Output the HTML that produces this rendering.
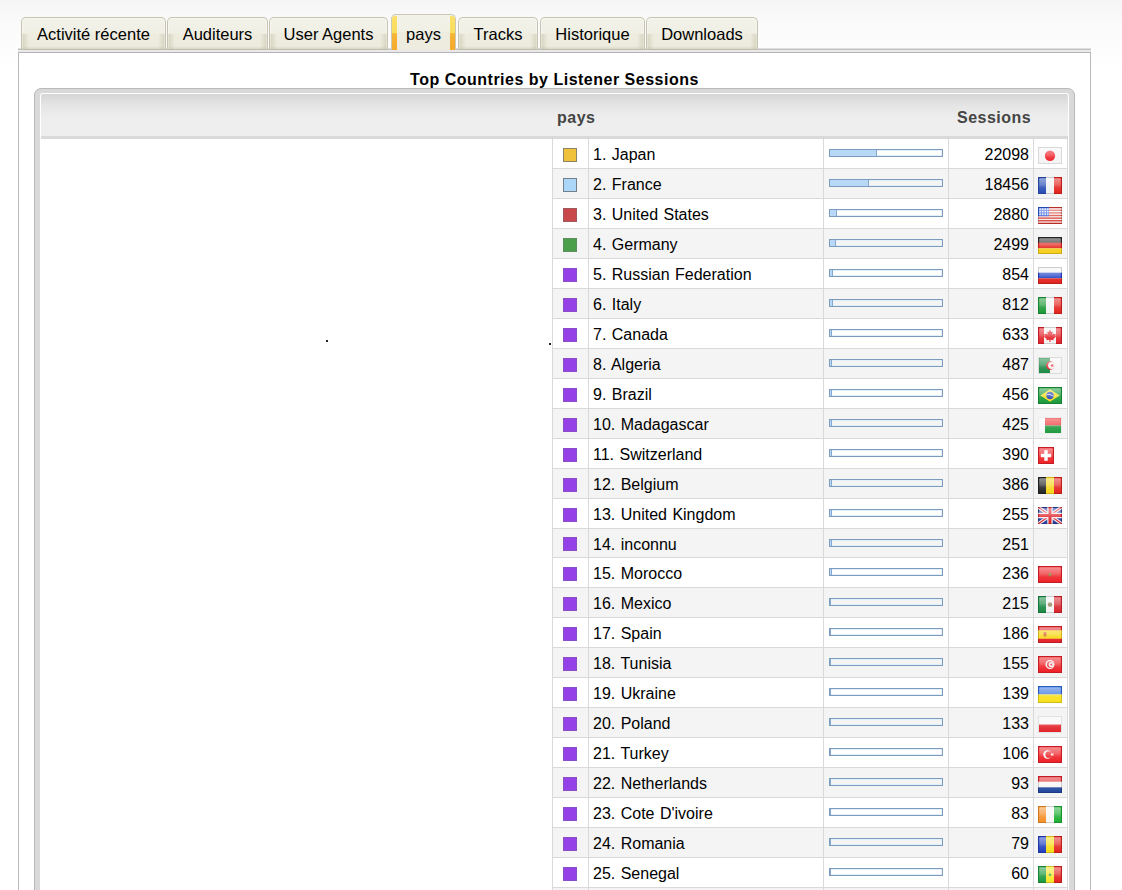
<!DOCTYPE html>
<html lang="fr">
<head>
<meta charset="utf-8">
<title>Top Countries by Listener Sessions</title>
<style>
*{box-sizing:border-box}
html,body{margin:0;padding:0}
body{width:1122px;height:890px;overflow:hidden;position:relative;font-family:"Liberation Sans",sans-serif;font-size:16px;color:#000;
 background:linear-gradient(#f5f5f5 0,#fafafa 22px,#fdfdfd 48px,#fff 72px) #fff}
ul.tabs{list-style:none;margin:0;padding:0;position:absolute;left:0;top:0;z-index:2}
.tab{position:absolute;top:17px;height:33px;border:1px solid #c6c4b1;border-bottom:1px solid #bfbeac;border-radius:5px 5px 0 0;text-align:center;line-height:32px;font-size:16.5px;white-space:nowrap;
 background:linear-gradient(to right,rgba(176,173,140,.38),rgba(176,173,140,0)) left bottom/7px 50% no-repeat,linear-gradient(to left,rgba(176,173,140,.38),rgba(176,173,140,0)) right bottom/7px 50% no-repeat,linear-gradient(to top,rgba(176,173,140,.3),rgba(176,173,140,0)) left bottom/100% 3px no-repeat,linear-gradient(#f3f2e9 0,#f0efe4 50%,#edecdf 50%,#ecebde 100%);
 box-shadow:inset 0 1px 0 #f8f7f0,inset 1px 0 0 rgba(255,255,255,.35),inset -1px 0 0 rgba(255,255,255,.35)}
.tab span{position:relative}
.tab.active{top:14px;height:36px;line-height:38px;border-color:#cbc9b4;border-bottom:none;background:linear-gradient(#f3f2e8 0,#f1f0e5 50%,#edecdf 50%,#edecdf 100%);box-shadow:none}
.tab.active:before,.tab.active:after{content:"";position:absolute;top:1px;bottom:0;width:5px;background:linear-gradient(#fbe169 0,#fbdd5c 50%,#f7b535 52%,#f5aa2c 100%)}
.tab.active:before{left:0;border-radius:3px 0 0 0}.tab.active:after{right:0;border-radius:0 3px 0 0}
#panel{position:absolute;left:18px;top:49px;width:1073px;height:900px;background:#fff;border:1px solid #b9b9bc;border-top:none;padding-top:4px}
#panel:before{content:"";position:absolute;left:-1px;right:-1px;top:-1px;height:5px;background:linear-gradient(#dfdfdf 0,#dfdfdf 1px,#c0c0c0 1px,#c0c0c0 2px,#e9e9e9 2px,#e9e9e9 4px,#b4b4b8 4px,#b4b4b8 5px)}
h1{position:absolute;left:0;top:21px;width:100%;margin:0;text-align:center;font-size:16px;font-weight:bold;line-height:20px;color:#000;letter-spacing:.5px}
#frame{position:absolute;left:15px;top:39px;width:1041px;height:900px;border-radius:7px;background:#d9d9d9;border:1px solid #b9b9b9}
#inner{position:absolute;left:6px;top:5px;width:1027px;height:900px;background:#fff;border-radius:2px 2px 0 0;overflow:hidden;box-shadow:0 0 0 1px #fff}
#hdr{position:absolute;left:0;top:0;width:100%;height:45px;background:linear-gradient(#d6d6d6 0,#e5e5e5 28%,#eeeeee 58%,#eeeeee 100%);border-bottom:3px solid #d9d9d9;font-weight:bold;color:#444}
#hdr span{position:absolute;top:14px;line-height:20px;letter-spacing:.5px}
table{position:absolute;left:511px;top:44px;border-collapse:collapse;table-layout:fixed;width:516px}
td{border:1px solid #d9d9d9;height:30px;padding:0;vertical-align:middle;font-size:16px;line-height:18px;white-space:nowrap}
tr.nf td{height:29px}
tr.nf td.c2,tr.nf td.c4{padding-top:4px}
tr.nf .sw{margin-top:1px}
tr.alt td{background:#f4f4f4}
td.c1{width:36px}
td.c2{width:235px;padding:2px 0 0 4px;word-spacing:1px}
td.c3{width:125px}
td.c4{width:85px;text-align:right;padding:2px 4px 0 0}
td.c5{width:34px}
.sw{display:block;width:14px;height:14px;margin:3px 0 0 10px;background:#9441e8;border:1px solid #8a4fc4}
.bar{display:block;width:114px;height:8px;margin:0 0 1px 5px;border:1px solid #7c9cbd;background:transparent;box-shadow:inset 0 0 0 1px #e3f0fc}
.fill{display:block;height:6px;background:#b9d8f7;border-right:1px solid #86a8cc}
.dot{position:absolute;width:2px;height:2px;background:#222}
.flag{display:block;margin:4px 0 0 4px;filter:blur(.35px)}
</style>
</head>
<body>
<svg width="0" height="0" style="position:absolute"><defs>
<linearGradient id="gl" x1="0" y1="0" x2="0" y2="1">
<stop offset="0" stop-color="#fff" stop-opacity=".5"/><stop offset=".45" stop-color="#fff" stop-opacity=".3"/><stop offset=".65" stop-color="#fff" stop-opacity=".1"/><stop offset="1" stop-color="#fff" stop-opacity="0"/>
</linearGradient></defs></svg>
<ul class="tabs"><li class="tab" style="left:21px;width:145px"><span>Activité récente</span></li><li class="tab" style="left:167px;width:101px"><span>Auditeurs</span></li><li class="tab" style="left:269px;width:119px"><span>User Agents</span></li><li class="tab active" style="left:391px;width:65px"><span>pays</span></li><li class="tab" style="left:458px;width:80px"><span>Tracks</span></li><li class="tab" style="left:540px;width:105px"><span>Historique</span></li><li class="tab" style="left:646px;width:112px"><span>Downloads</span></li></ul>
<div id="panel">
<h1>Top Countries by Listener Sessions</h1>
<div id="frame"><div id="inner">
<div id="hdr"><span style="left:516px">pays</span><span style="left:916px">Sessions</span></div>
<i class="dot" style="left:285px;top:246px"></i><i class="dot" style="left:508px;top:249px"></i>
<table>
<tr class=""><td class="c1"><span class="sw" style="background:#f0c23b;border-color:#8d8466"></span></td><td class="c2">1. Japan</td><td class="c3"><span class="bar"><span class="fill" style="width:46.7px"></span></span></td><td class="c4">22098</td><td class="c5"><svg class="flag" width="24" height="17" viewBox="0 0 24 17"><rect width="24" height="17" fill="#f4f4f4"/><circle cx="12" cy="8.7" r="5.2" fill="#ef2228"/><rect x="1.2" y="1.2" width="21.6" height="14.6" rx="1" fill="url(#gl)"/><rect x=".5" y=".5" width="23" height="16" fill="none" stroke="#d9d9d9"/></svg></td></tr>
<tr class="alt"><td class="c1"><span class="sw" style="background:#acd6f8;border-color:#72808c"></span></td><td class="c2">2. France</td><td class="c3"><span class="bar"><span class="fill" style="width:39.1px"></span></span></td><td class="c4">18456</td><td class="c5"><svg class="flag" width="24" height="17" viewBox="0 0 24 17"><rect width="8" height="17" fill="#2a4fb5"/><rect x="8" width="8" height="17" fill="#f2f2f2"/><rect x="16" width="8" height="17" fill="#e3241f"/><rect x="1.2" y="1.2" width="21.6" height="14.6" rx="1" fill="url(#gl)"/><rect x=".5" y=".5" width="23" height="16" fill="none" stroke="rgba(0,0,0,.16)"/></svg></td></tr>
<tr class=""><td class="c1"><span class="sw" style="background:#c9484b;border-color:#a0585a"></span></td><td class="c2">3. United States</td><td class="c3"><span class="bar"><span class="fill" style="width:7.0px"></span></span></td><td class="c4">2880</td><td class="c5"><svg class="flag" width="24" height="17" viewBox="0 0 24 17"><rect width="24" height="17" fill="#f6efee"/><rect y="0" width="24" height="1.31" fill="#d8392f"/><rect y="2.62" width="24" height="1.31" fill="#d8392f"/><rect y="5.23" width="24" height="1.31" fill="#d8392f"/><rect y="7.85" width="24" height="1.31" fill="#d8392f"/><rect y="10.46" width="24" height="1.31" fill="#d8392f"/><rect y="13.08" width="24" height="1.31" fill="#d8392f"/><rect y="15.69" width="24" height="1.31" fill="#d8392f"/><rect width="11" height="9.2" fill="#2b57d6"/><rect x="1.3" y="1.4" width="1.5" height="1.5" fill="#f2f5ff"/><rect x="3.9" y="1.4" width="1.5" height="1.5" fill="#f2f5ff"/><rect x="6.5" y="1.4" width="1.5" height="1.5" fill="#f2f5ff"/><rect x="9.0" y="1.4" width="1.5" height="1.5" fill="#f2f5ff"/><rect x="1.3" y="3.9" width="1.5" height="1.5" fill="#f2f5ff"/><rect x="3.9" y="3.9" width="1.5" height="1.5" fill="#f2f5ff"/><rect x="6.5" y="3.9" width="1.5" height="1.5" fill="#f2f5ff"/><rect x="9.0" y="3.9" width="1.5" height="1.5" fill="#f2f5ff"/><rect x="1.3" y="6.4" width="1.5" height="1.5" fill="#f2f5ff"/><rect x="3.9" y="6.4" width="1.5" height="1.5" fill="#f2f5ff"/><rect x="6.5" y="6.4" width="1.5" height="1.5" fill="#f2f5ff"/><rect x="9.0" y="6.4" width="1.5" height="1.5" fill="#f2f5ff"/><rect x="1.2" y="1.2" width="21.6" height="14.6" rx="1" fill="url(#gl)"/><rect x=".5" y=".5" width="23" height="16" fill="none" stroke="rgba(0,0,0,.16)"/></svg></td></tr>
<tr class="alt"><td class="c1"><span class="sw" style="background:#4b9f4b;border-color:#5c8f5c"></span></td><td class="c2">4. Germany</td><td class="c3"><span class="bar"><span class="fill" style="width:6.2px"></span></span></td><td class="c4">2499</td><td class="c5"><svg class="flag" width="24" height="17" viewBox="0 0 24 17"><rect width="24" height="6" fill="#2b2b2b"/><rect y="5.67" width="24" height="5.67" fill="#e2231a"/><rect y="11.33" width="24" height="5.67" fill="#f5cf1c"/><rect x="1.2" y="1.2" width="21.6" height="14.6" rx="1" fill="url(#gl)"/><rect x=".5" y=".5" width="23" height="16" fill="none" stroke="rgba(0,0,0,.16)"/></svg></td></tr>
<tr class=""><td class="c1"><span class="sw"></span></td><td class="c2">5. Russian Federation</td><td class="c3"><span class="bar"><span class="fill" style="width:2.8px"></span></span></td><td class="c4">854</td><td class="c5"><svg class="flag" width="24" height="17" viewBox="0 0 24 17"><rect width="24" height="6" fill="#f4f4f4"/><rect y="5.67" width="24" height="5.67" fill="#2444c8"/><rect y="11.33" width="24" height="5.67" fill="#e3241f"/><rect x="1.2" y="1.2" width="21.6" height="14.6" rx="1" fill="url(#gl)"/><rect x=".5" y=".5" width="23" height="16" fill="none" stroke="rgba(0,0,0,.16)"/></svg></td></tr>
<tr class="alt"><td class="c1"><span class="sw"></span></td><td class="c2">6. Italy</td><td class="c3"><span class="bar"><span class="fill" style="width:2.7px"></span></span></td><td class="c4">812</td><td class="c5"><svg class="flag" width="24" height="17" viewBox="0 0 24 17"><rect width="8" height="17" fill="#1f9a38"/><rect x="8" width="8" height="17" fill="#f4f4f4"/><rect x="16" width="8" height="17" fill="#e3241f"/><rect x="1.2" y="1.2" width="21.6" height="14.6" rx="1" fill="url(#gl)"/><rect x=".5" y=".5" width="23" height="16" fill="none" stroke="rgba(0,0,0,.16)"/></svg></td></tr>
<tr class=""><td class="c1"><span class="sw"></span></td><td class="c2">7. Canada</td><td class="c3"><span class="bar"><span class="fill" style="width:2.3px"></span></span></td><td class="c4">633</td><td class="c5"><svg class="flag" width="24" height="17" viewBox="0 0 24 17"><rect width="24" height="17" fill="#f4f4f4"/><rect width="6" height="17" fill="#e3242b"/><rect x="18" width="6" height="17" fill="#e3242b"/><path d="M12 2.6l1.3 2.5 1.4-.6-.6 3.3 1.7-1.5.4 1 2-.4-.8 2.2.8.5-2.9 2.4.4 1.2-3.2-.5V15h-1v-2.3l-3.2.5.4-1.2-2.9-2.4.8-.5-.8-2.2 2 .4.4-1 1.7 1.5-.6-3.3 1.4.6z" fill="#e3242b"/><rect x="1.2" y="1.2" width="21.6" height="14.6" rx="1" fill="url(#gl)"/><rect x=".5" y=".5" width="23" height="16" fill="none" stroke="rgba(0,0,0,.16)"/></svg></td></tr>
<tr class="alt"><td class="c1"><span class="sw"></span></td><td class="c2">8. Algeria</td><td class="c3"><span class="bar"><span class="fill" style="width:2.0px"></span></span></td><td class="c4">487</td><td class="c5"><svg class="flag" width="24" height="17" viewBox="0 0 24 17"><rect width="24" height="17" fill="#f4f4f4"/><rect width="12" height="17" fill="#1d8a45"/><circle cx="12.3" cy="8.5" r="4.2" fill="#e3242b"/><circle cx="13.5" cy="8.5" r="3.4" fill="#f4f4f4"/><rect x="0" y="0" width="12" height="17" fill="#1d8a45" opacity="0"/><polygon points="12.20,8.50 13.55,8.03 13.58,6.60 14.45,7.74 15.82,7.32 15.00,8.50 15.82,9.68 14.45,9.26 13.58,10.40 13.55,8.97" fill="#e3242b"/><rect x="1.2" y="1.2" width="21.6" height="14.6" rx="1" fill="url(#gl)"/><rect x=".5" y=".5" width="23" height="16" fill="none" stroke="#dcdcdc"/></svg></td></tr>
<tr class=""><td class="c1"><span class="sw"></span></td><td class="c2">9. Brazil</td><td class="c3"><span class="bar"><span class="fill" style="width:1.9px"></span></span></td><td class="c4">456</td><td class="c5"><svg class="flag" width="24" height="17" viewBox="0 0 24 17"><rect width="24" height="17" fill="#1c9a3c"/><polygon points="12,2.2 21.6,8.5 12,14.8 2.4,8.5" fill="#f7dd1d"/><circle cx="12" cy="8.5" r="3.7" fill="#2a49b8"/><path d="M8.5 7.6q3.8-.9 7.1 1.7" stroke="#f0f0f0" stroke-width=".8" fill="none"/><rect x="1.2" y="1.2" width="21.6" height="14.6" rx="1" fill="url(#gl)"/><rect x=".5" y=".5" width="23" height="16" fill="none" stroke="rgba(0,0,0,.16)"/></svg></td></tr>
<tr class="alt"><td class="c1"><span class="sw"></span></td><td class="c2">10. Madagascar</td><td class="c3"><span class="bar"><span class="fill" style="width:1.9px"></span></span></td><td class="c4">425</td><td class="c5"><svg class="flag" width="24" height="17" viewBox="0 0 24 17"><rect width="24" height="17" fill="#f8f8f8"/><rect x="7" width="17" height="8.5" fill="#ee2f2f"/><rect x="7" y="8.5" width="17" height="8.5" fill="#1f9a40"/><rect x="1.2" y="1.2" width="21.6" height="14.6" rx="1" fill="url(#gl)"/><rect x=".5" y=".5" width="23" height="16" fill="none" stroke="#ececec"/></svg></td></tr>
<tr class=""><td class="c1"><span class="sw"></span></td><td class="c2">11. Switzerland</td><td class="c3"><span class="bar"><span class="fill" style="width:1.8px"></span></span></td><td class="c4">390</td><td class="c5"><svg class="flag" width="16" height="17" viewBox="0 0 16 17"><rect width="16" height="17" fill="#ee2228"/><rect x="6.3" y="3.2" width="3.4" height="10.6" fill="#fff"/><rect x="2.9" y="6.8" width="10.2" height="3.4" fill="#fff"/><rect x="1.2" y="1.2" width="13.6" height="14.6" rx="1" fill="url(#gl)"/><rect x=".5" y=".5" width="15" height="16" fill="none" stroke="rgba(0,0,0,.16)"/></svg></td></tr>
<tr class="alt"><td class="c1"><span class="sw"></span></td><td class="c2">12. Belgium</td><td class="c3"><span class="bar"><span class="fill" style="width:1.8px"></span></span></td><td class="c4">386</td><td class="c5"><svg class="flag" width="24" height="17" viewBox="0 0 24 17"><rect width="8" height="17" fill="#262626"/><rect x="8" width="8" height="17" fill="#f7d61c"/><rect x="16" width="8" height="17" fill="#e3241f"/><rect x="1.2" y="1.2" width="21.6" height="14.6" rx="1" fill="url(#gl)"/><rect x=".5" y=".5" width="23" height="16" fill="none" stroke="rgba(0,0,0,.16)"/></svg></td></tr>
<tr class=""><td class="c1"><span class="sw"></span></td><td class="c2">13. United Kingdom</td><td class="c3"><span class="bar"><span class="fill" style="width:1.5px"></span></span></td><td class="c4">255</td><td class="c5"><svg class="flag" width="24" height="17" viewBox="0 0 24 17"><rect width="24" height="17" fill="#2b3f9e"/><path d="M0 0l24 17M24 0L0 17" stroke="#f2f2f2" stroke-width="3.4"/><path d="M0 0l24 17M24 0L0 17" stroke="#e0262d" stroke-width="1.2"/><path d="M12 0v17M0 8.5h24" stroke="#f2f2f2" stroke-width="5.4"/><path d="M12 0v17M0 8.5h24" stroke="#e0262d" stroke-width="3"/><rect x="1.2" y="1.2" width="21.6" height="14.6" rx="1" fill="url(#gl)"/><rect x=".5" y=".5" width="23" height="16" fill="none" stroke="rgba(0,0,0,.16)"/></svg></td></tr>
<tr class="alt nf"><td class="c1"><span class="sw"></span></td><td class="c2">14. inconnu</td><td class="c3"><span class="bar"><span class="fill" style="width:1.5px"></span></span></td><td class="c4">251</td><td class="c5"></td></tr>
<tr class=""><td class="c1"><span class="sw"></span></td><td class="c2">15. Morocco</td><td class="c3"><span class="bar"><span class="fill" style="width:1.5px"></span></span></td><td class="c4">236</td><td class="c5"><svg class="flag" width="24" height="17" viewBox="0 0 24 17"><rect width="24" height="17" fill="#ee2228"/><polygon points="12.00,6.10 12.61,7.86 14.47,7.90 12.99,9.02 13.53,10.80 12.00,9.74 10.47,10.80 11.01,9.02 9.53,7.90 11.39,7.86" fill="#7a7a2a"/><rect x="1.2" y="1.2" width="21.6" height="14.6" rx="1" fill="url(#gl)"/><rect x=".5" y=".5" width="23" height="16" fill="none" stroke="rgba(0,0,0,.16)"/></svg></td></tr>
<tr class="alt"><td class="c1"><span class="sw"></span></td><td class="c2">16. Mexico</td><td class="c3"><span class="bar"><span class="fill" style="width:1.4px"></span></span></td><td class="c4">215</td><td class="c5"><svg class="flag" width="24" height="17" viewBox="0 0 24 17"><rect width="8" height="17" fill="#1b8a45"/><rect x="8" width="8" height="17" fill="#f4f4f4"/><rect x="16" width="8" height="17" fill="#d8262f"/><circle cx="12" cy="8.5" r="2.3" fill="#9c7b54"/><circle cx="12" cy="8" r="1.1" fill="#6f8a58"/><rect x="1.2" y="1.2" width="21.6" height="14.6" rx="1" fill="url(#gl)"/><rect x=".5" y=".5" width="23" height="16" fill="none" stroke="rgba(0,0,0,.16)"/></svg></td></tr>
<tr class=""><td class="c1"><span class="sw"></span></td><td class="c2">17. Spain</td><td class="c3"><span class="bar"><span class="fill" style="width:1.4px"></span></span></td><td class="c4">186</td><td class="c5"><svg class="flag" width="24" height="17" viewBox="0 0 24 17"><rect width="24" height="17" fill="#e3242b"/><rect y="4.25" width="24" height="8.5" fill="#f8d81c"/><rect x="5.5" y="6" width="3" height="4.6" rx="1" fill="#d8662f"/><rect x="1.2" y="1.2" width="21.6" height="14.6" rx="1" fill="url(#gl)"/><rect x=".5" y=".5" width="23" height="16" fill="none" stroke="rgba(0,0,0,.16)"/></svg></td></tr>
<tr class="alt"><td class="c1"><span class="sw"></span></td><td class="c2">18. Tunisia</td><td class="c3"><span class="bar"><span class="fill" style="width:1.3px"></span></span></td><td class="c4">155</td><td class="c5"><svg class="flag" width="24" height="17" viewBox="0 0 24 17"><rect width="24" height="17" fill="#ee2228"/><circle cx="12" cy="8.5" r="4.5" fill="#f6f6f6"/><circle cx="12.3" cy="8.5" r="3.3" fill="#ee2228"/><circle cx="13.2" cy="8.5" r="2.6" fill="#f6f6f6"/><polygon points="11.60,8.50 12.75,8.10 12.77,6.88 13.51,7.85 14.68,7.50 13.98,8.50 14.68,9.50 13.51,9.15 12.77,10.12 12.75,8.90" fill="#ee2228"/><rect x="1.2" y="1.2" width="21.6" height="14.6" rx="1" fill="url(#gl)"/><rect x=".5" y=".5" width="23" height="16" fill="none" stroke="rgba(0,0,0,.16)"/></svg></td></tr>
<tr class=""><td class="c1"><span class="sw"></span></td><td class="c2">19. Ukraine</td><td class="c3"><span class="bar"><span class="fill" style="width:1.3px"></span></span></td><td class="c4">139</td><td class="c5"><svg class="flag" width="24" height="17" viewBox="0 0 24 17"><rect width="24" height="8.5" fill="#2f6fe0"/><rect y="8.5" width="24" height="8.5" fill="#f8e01c"/><rect x="1.2" y="1.2" width="21.6" height="14.6" rx="1" fill="url(#gl)"/><rect x=".5" y=".5" width="23" height="16" fill="none" stroke="rgba(0,0,0,.16)"/></svg></td></tr>
<tr class="alt"><td class="c1"><span class="sw"></span></td><td class="c2">20. Poland</td><td class="c3"><span class="bar"><span class="fill" style="width:1.3px"></span></span></td><td class="c4">133</td><td class="c5"><svg class="flag" width="24" height="17" viewBox="0 0 24 17"><rect width="24" height="8.5" fill="#f6f6f6"/><rect y="8.5" width="24" height="8.5" fill="#e3242b"/><rect x="1.2" y="1.2" width="21.6" height="14.6" rx="1" fill="url(#gl)"/><rect x=".5" y=".5" width="23" height="16" fill="none" stroke="#e2e2e2"/></svg></td></tr>
<tr class=""><td class="c1"><span class="sw"></span></td><td class="c2">21. Turkey</td><td class="c3"><span class="bar"><span class="fill" style="width:1.2px"></span></span></td><td class="c4">106</td><td class="c5"><svg class="flag" width="24" height="17" viewBox="0 0 24 17"><rect width="24" height="17" fill="#ee2228"/><circle cx="9.5" cy="8.5" r="4.2" fill="#f8f8f8"/><circle cx="10.7" cy="8.5" r="3.35" fill="#ee2228"/><polygon points="12.10,8.50 13.52,8.01 13.55,6.50 14.46,7.70 15.90,7.27 15.04,8.50 15.90,9.73 14.46,9.30 13.55,10.50 13.52,8.99" fill="#f8f8f8"/><rect x="1.2" y="1.2" width="21.6" height="14.6" rx="1" fill="url(#gl)"/><rect x=".5" y=".5" width="23" height="16" fill="none" stroke="rgba(0,0,0,.16)"/></svg></td></tr>
<tr class="alt"><td class="c1"><span class="sw"></span></td><td class="c2">22. Netherlands</td><td class="c3"><span class="bar"><span class="fill" style="width:1.2px"></span></span></td><td class="c4">93</td><td class="c5"><svg class="flag" width="24" height="17" viewBox="0 0 24 17"><rect width="24" height="6" fill="#e3242b"/><rect y="5.67" width="24" height="5.67" fill="#f6f6f6"/><rect y="11.33" width="24" height="5.67" fill="#23479e"/><rect x="1.2" y="1.2" width="21.6" height="14.6" rx="1" fill="url(#gl)"/><rect x=".5" y=".5" width="23" height="16" fill="none" stroke="rgba(0,0,0,.16)"/></svg></td></tr>
<tr class=""><td class="c1"><span class="sw"></span></td><td class="c2">23. Cote D'ivoire</td><td class="c3"><span class="bar"><span class="fill" style="width:1.2px"></span></span></td><td class="c4">83</td><td class="c5"><svg class="flag" width="24" height="17" viewBox="0 0 24 17"><rect width="8" height="17" fill="#f5902a"/><rect x="8" width="8" height="17" fill="#f6f6f6"/><rect x="16" width="8" height="17" fill="#1fb035"/><rect x="1.2" y="1.2" width="21.6" height="14.6" rx="1" fill="url(#gl)"/><rect x=".5" y=".5" width="23" height="16" fill="none" stroke="rgba(0,0,0,.16)"/></svg></td></tr>
<tr class="alt"><td class="c1"><span class="sw"></span></td><td class="c2">24. Romania</td><td class="c3"><span class="bar"><span class="fill" style="width:1.2px"></span></span></td><td class="c4">79</td><td class="c5"><svg class="flag" width="24" height="17" viewBox="0 0 24 17"><rect width="8" height="17" fill="#2340c0"/><rect x="8" width="8" height="17" fill="#f8dc1c"/><rect x="16" width="8" height="17" fill="#e3241f"/><rect x="1.2" y="1.2" width="21.6" height="14.6" rx="1" fill="url(#gl)"/><rect x=".5" y=".5" width="23" height="16" fill="none" stroke="rgba(0,0,0,.16)"/></svg></td></tr>
<tr class=""><td class="c1"><span class="sw"></span></td><td class="c2">25. Senegal</td><td class="c3"><span class="bar"><span class="fill" style="width:1.1px"></span></span></td><td class="c4">60</td><td class="c5"><svg class="flag" width="24" height="17" viewBox="0 0 24 17"><rect width="8" height="17" fill="#1f9a40"/><rect x="8" width="8" height="17" fill="#f8e62a"/><rect x="16" width="8" height="17" fill="#e3241f"/><polygon points="12.00,6.60 12.47,7.95 13.90,7.98 12.76,8.85 13.18,10.22 12.00,9.40 10.82,10.22 11.24,8.85 10.10,7.98 11.53,7.95" fill="#1f9a40"/><rect x="1.2" y="1.2" width="21.6" height="14.6" rx="1" fill="url(#gl)"/><rect x=".5" y=".5" width="23" height="16" fill="none" stroke="rgba(0,0,0,.16)"/></svg></td></tr>
<tr class="alt"><td class="c1"></td><td class="c2"></td><td class="c3"></td><td class="c4"></td><td class="c5"></td></tr>
</table>
</div></div>
</div>
</body>
</html>
